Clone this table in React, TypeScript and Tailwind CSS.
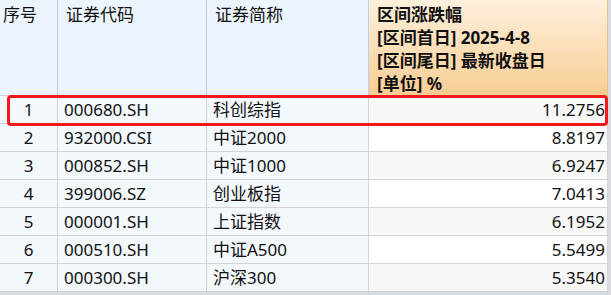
import React from "react";

const rows = [
  ["1", "000680.SH", "科创综指", "11.2756"],
  ["2", "932000.CSI", "中证2000", "8.8197"],
  ["3", "000852.SH", "中证1000", "6.9247"],
  ["4", "399006.SZ", "创业板指", "7.0413"],
  ["5", "000001.SH", "上证指数", "6.1952"],
  ["6", "000510.SH", "中证A500", "5.5499"],
  ["7", "000300.SH", "沪深300", "5.3540"],
];

export default function App() {
  return (
    <div
      className="relative w-[611px] h-[295px] bg-[#d9dde1] overflow-hidden text-[17px] text-[#111]"
      style={{ fontFamily: '"Noto Sans", "Noto Sans CJK SC", sans-serif' }}
    >
      <div className="w-[608px] bg-white">
        <div className="grid grid-cols-[58px_149px_162px_239px] h-[96px] border-b border-[#c9d6e6]">
          <div className="bg-[#ecf5fe] border-r border-[#b7cfec] pl-[3px] pt-[3px] leading-[23px]">序号</div>
          <div className="bg-[#ecf5fe] border-r border-[#b7cfec] pl-[8px] pt-[3px] leading-[23px]">证券代码</div>
          <div className="bg-[#ecf5fe] border-r border-[#b7cfec] pl-[8px] pt-[3px] leading-[23px]">证券简称</div>
          <div className="bg-gradient-to-b from-[#fdf0dc] to-[#f8cd93] border-r border-[#e9c08a] pl-[8px] pt-[3px] leading-[23px] font-bold">
            <div>区间涨跌幅</div>
            <div>[区间首日] 2025-4-8</div>
            <div>[区间尾日] 最新收盘日</div>
            <div>[单位] %</div>
          </div>
        </div>
        {rows.map((r, i) => (
          <div key={i} className="grid grid-cols-[58px_149px_162px_239px] h-[28px] border-b border-[#d4d4d4] leading-[27px]">
            <div className="bg-[#f3f8fd] border-r border-[#d4d4d4] text-center">{r[0]}</div>
            <div className="bg-[#f3f8fd] border-r border-[#d4d4d4] pl-[6px]">{r[1]}</div>
            <div className="bg-[#f3f8fd] border-r border-[#d4d4d4] pl-[6px]">{r[2]}</div>
            <div className={`${i % 2 === 0 ? "bg-[#f8f8f8]" : "bg-white"} border-r border-[#d4d4d4] text-right pr-[2px]`}>{r[3]}</div>
          </div>
        ))}
      </div>
      <div className="absolute left-[7px] top-[95px] w-[601px] h-[31px] border-[3px] border-[#f4181a] rounded-[4px]" />
    </div>
  );
}
